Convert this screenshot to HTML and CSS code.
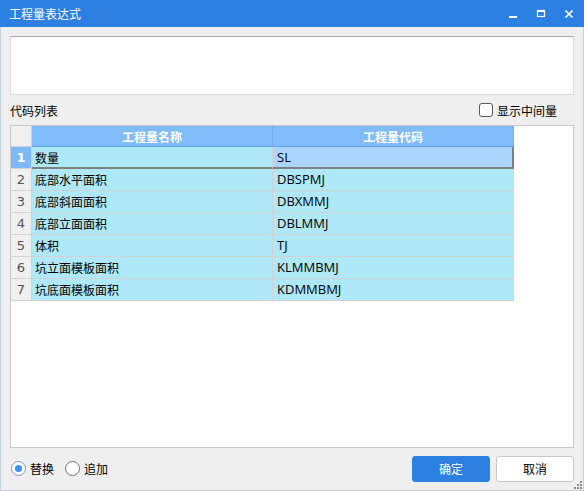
FILE: index.html
```html
<!DOCTYPE html>
<html lang="zh">
<head>
<meta charset="utf-8">
<title>工程量表达式</title>
<link rel="stylesheet" href="styles.css">
</head>
<body>
<div class="window">
  <div class="titlebar">
    <span class="title">工程量表达式</span>
    <div class="controls">
      <svg class="ctl" width="12" height="12" viewBox="0 0 12 12"><rect x="2" y="8" width="8" height="2" fill="#fff"/></svg>
      <svg class="ctl" width="12" height="12" viewBox="0 0 12 12"><rect x="2.5" y="2.5" width="7" height="6" fill="none" stroke="#fff" stroke-width="1.2"/><rect x="2" y="2" width="8" height="2" fill="#fff"/></svg>
      <svg class="ctl" width="12" height="12" viewBox="0 0 12 12"><path d="M2.5 2.5 L9.5 9.5 M9.5 2.5 L2.5 9.5" stroke="#fff" stroke-width="1.6"/></svg>
    </div>
  </div>
  <div class="body">
    <div class="expr"></div>
    <div class="listbar">
      <span class="label">代码列表</span>
      <label class="check"><span class="box"></span>显示中间量</label>
    </div>
    <div class="grid">
      <div class="row head">
        <div class="cell num"></div>
        <div class="cell hd">工程量名称</div>
        <div class="cell hd">工程量代码</div>
      </div>
      <div class="row sel">
        <div class="cell num cur">1</div>
        <div class="cell name">数量</div>
        <div class="cell code">SL</div>
      </div>
      <div class="row">
        <div class="cell num">2</div>
        <div class="cell name">底部水平面积</div>
        <div class="cell code">DBSPMJ</div>
      </div>
      <div class="row">
        <div class="cell num">3</div>
        <div class="cell name">底部斜面面积</div>
        <div class="cell code">DBXMMJ</div>
      </div>
      <div class="row">
        <div class="cell num">4</div>
        <div class="cell name">底部立面面积</div>
        <div class="cell code">DBLMMJ</div>
      </div>
      <div class="row">
        <div class="cell num">5</div>
        <div class="cell name">体积</div>
        <div class="cell code">TJ</div>
      </div>
      <div class="row">
        <div class="cell num">6</div>
        <div class="cell name">坑立面模板面积</div>
        <div class="cell code">KLMMBMJ</div>
      </div>
      <div class="row">
        <div class="cell num">7</div>
        <div class="cell name">坑底面模板面积</div>
        <div class="cell code">KDMMBMJ</div>
      </div>
    </div>
    <div class="footer">
      <label class="radio"><span class="dot on"></span>替换</label>
      <label class="radio"><span class="dot"></span>追加</label>
      <div class="spacer"></div>
      <button class="btn primary">确定</button>
      <button class="btn">取消</button>
    </div>
    <svg class="grip" width="8" height="8" viewBox="0 0 8 8">
      <rect x="6" y="0" width="2" height="2" fill="#8a8a8a"/>
      <rect x="3" y="3" width="2" height="2" fill="#8a8a8a"/>
      <rect x="6" y="3" width="2" height="2" fill="#8a8a8a"/>
      <rect x="0" y="6" width="2" height="2" fill="#8a8a8a"/>
      <rect x="3" y="6" width="2" height="2" fill="#8a8a8a"/>
      <rect x="6" y="6" width="2" height="2" fill="#8a8a8a"/>
    </svg>
  </div>
</div>
</body>
</html>
```

FILE: styles.css
```css
* { box-sizing: border-box; }
html, body { margin: 0; padding: 0; }
body {
  width: 584px;
  height: 491px;
  overflow: hidden;
  font-family: "Noto Sans CJK SC", "Noto Sans", sans-serif;
  font-size: 12px;
  color: #000;
  background: #efefef;
}
.window {
  width: 584px;
  height: 491px;
  display: flex;
  flex-direction: column;
  background: #efefef;
}
.titlebar {
  height: 27px;
  background: #2c80e1;
  display: flex;
  align-items: center;
  padding: 0 9px 0 9px;
  color: #fff;
  flex: none;
}
.title { font-size: 12px; line-height: 27px; flex: 1; }
.controls { display: flex; gap: 16px; align-items: center; }
.ctl { display: block; }
.body {
  flex: 1;
  position: relative;
  border-left: 1px solid #c6d0de;
  border-right: 1px solid #c6d0de;
  border-bottom: 1px solid #c6d0de;
  padding: 9px 9px 0 9px;
  display: flex;
  flex-direction: column;
}
.expr {
  height: 59px;
  background: #fff;
  border: 1px solid #dcdcdc;
  border-top-color: #a8a8b0;
  flex: none;
}
.listbar {
  height: 30px;
  display: flex;
  align-items: center;
  justify-content: space-between;
  flex: none;
}
.label { line-height: 16px; margin-top: 1px; }
.check { display: flex; align-items: center; gap: 4px; margin-right: 17px; }
.box {
  width: 14px; height: 14px;
  border: 1px solid #5a5a5a;
  border-radius: 3px;
  background: #fff;
  display: inline-block;
}
.grid {
  height: 323px;
  flex: none;
  background: #fff;
  border: 1px solid #c8c8c8;
  display: flex;
  flex-direction: column;
}
.row {
  display: grid;
  grid-template-columns: 21px 241px 241px;
  height: 22px;
}
.row.head { height: 21px; }
.cell {
  border-right: 1px solid #d3d3d3;
  border-bottom: 1px solid #d3d3d3;
  line-height: 21px;
  white-space: nowrap;
  overflow: hidden;
}
.num {
  background: #f0f0f0;
  text-align: center;
  color: #555;
  font-family: "DejaVu Sans", "Noto Sans", sans-serif;
  font-size: 13px;
}
.num.cur {
  background: #7db9f7;
  color: #fff;
  font-weight: bold;
}
.hd {
  background: #80bcf9;
  color: #fff;
  font-weight: bold;
  text-align: center;
  border-bottom: 1px solid #5fa6ee;
  border-right-color: #6eaef2;
}
.name { background: #aee8f9; padding-left: 3px; }
.code { background: #aee8f9; padding-left: 4px; font-family: "Open Sans", "Noto Sans", sans-serif; font-size: 13px; }
.row.sel .name { border-bottom: 2px solid #808080; }
.row.sel .code {
  background: #abd5fd;
  border-bottom: 2px solid #808080;
  border-right: 2px solid #808080;
}
.footer {
  flex: 1;
  display: flex;
  align-items: center;
  padding-top: 7px;
  padding-bottom: 8px;
}
.radio { display: flex; align-items: center; gap: 4px; margin-right: 10px; margin-left: 1px; }
.dot {
  width: 15px; height: 15px;
  border-radius: 50%;
  border: 1px solid #6f6f6f;
  background: #fff;
  display: inline-block;
  position: relative;
}
.dot.on { border-color: #7a9cc8; }
.dot.on::after {
  content: "";
  position: absolute;
  left: 3px; top: 3px;
  width: 7px; height: 7px;
  border-radius: 50%;
  background: #3b8ff0;
}
.spacer { flex: 1; }
.btn {
  width: 78px;
  height: 26px;
  border: 1px solid #c8c8c8;
  border-radius: 3px;
  background: #fff;
  font-family: inherit;
  font-size: 12px;
  color: #000;
  padding: 0;
  margin-left: 6px;
}
.btn.primary {
  background: #2c80e1;
  border-color: #2c80e1;
  color: #fff;
  margin-left: 0;
}
.grip { position: absolute; right: 1px; bottom: 1px; }
```
